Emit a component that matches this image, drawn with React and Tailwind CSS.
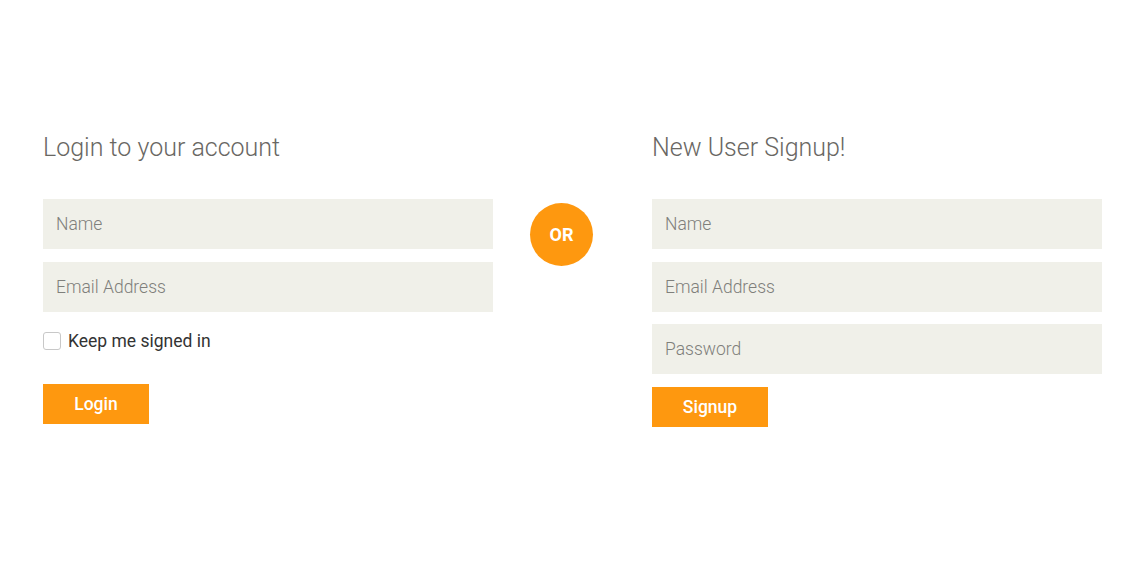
export default function App() {
    const font = { fontFamily: "Roboto, 'Liberation Sans', sans-serif" };
    const inputCls = "block w-full h-[50px] bg-[#F0F0E9] px-[13px] text-[17.5px] font-light text-[#696763] placeholder:text-[#7f7f7b] outline-none border-0";
    return (
        <div className="w-full h-[582px] bg-white flex items-start pl-[43px] pt-[134px]" style={font}>
            <div className="w-[450px]">
                <h2 className="text-[25px] leading-[28px] font-light text-[#696763] mb-[37px]">Login to your account</h2>
                <form className="flex flex-col" onSubmit={e => e.preventDefault()}>
                    <input className={inputCls} placeholder="Name" />
                    <input className={inputCls + " mt-[13px]"} placeholder="Email Address" />
                    <label className="flex items-center gap-[7px] mt-[16px] text-[17.5px] text-[#333333]">
                        <span className="w-[18px] h-[18px] border border-[#c8c8c8] rounded-[3px] bg-white"></span>
                        Keep me signed in
                    </label>
                    <button className="mt-[30px] w-[106px] h-[40px] bg-[#FE980F] text-white text-[17.5px] font-medium">Login</button>
                </form>
            </div>
            <div className="ml-[37px] mt-[69px] w-[63px] h-[63px] rounded-full bg-[#FE980F] flex items-center justify-center text-white text-[18px] font-bold">OR</div>
            <div className="w-[450px] ml-[59px]">
                <h2 className="text-[25px] leading-[28px] font-light text-[#696763] mb-[37px]">New User Signup!</h2>
                <form className="flex flex-col" onSubmit={e => e.preventDefault()}>
                    <input className={inputCls} placeholder="Name" />
                    <input className={inputCls + " mt-[13px]"} placeholder="Email Address" />
                    <input className={inputCls + " mt-[12px]"} placeholder="Password" type="password" />
                    <button className="mt-[13px] w-[116px] h-[40px] bg-[#FE980F] text-white text-[17.5px] font-medium">Signup</button>
                </form>
            </div>
        </div>
    );
}
